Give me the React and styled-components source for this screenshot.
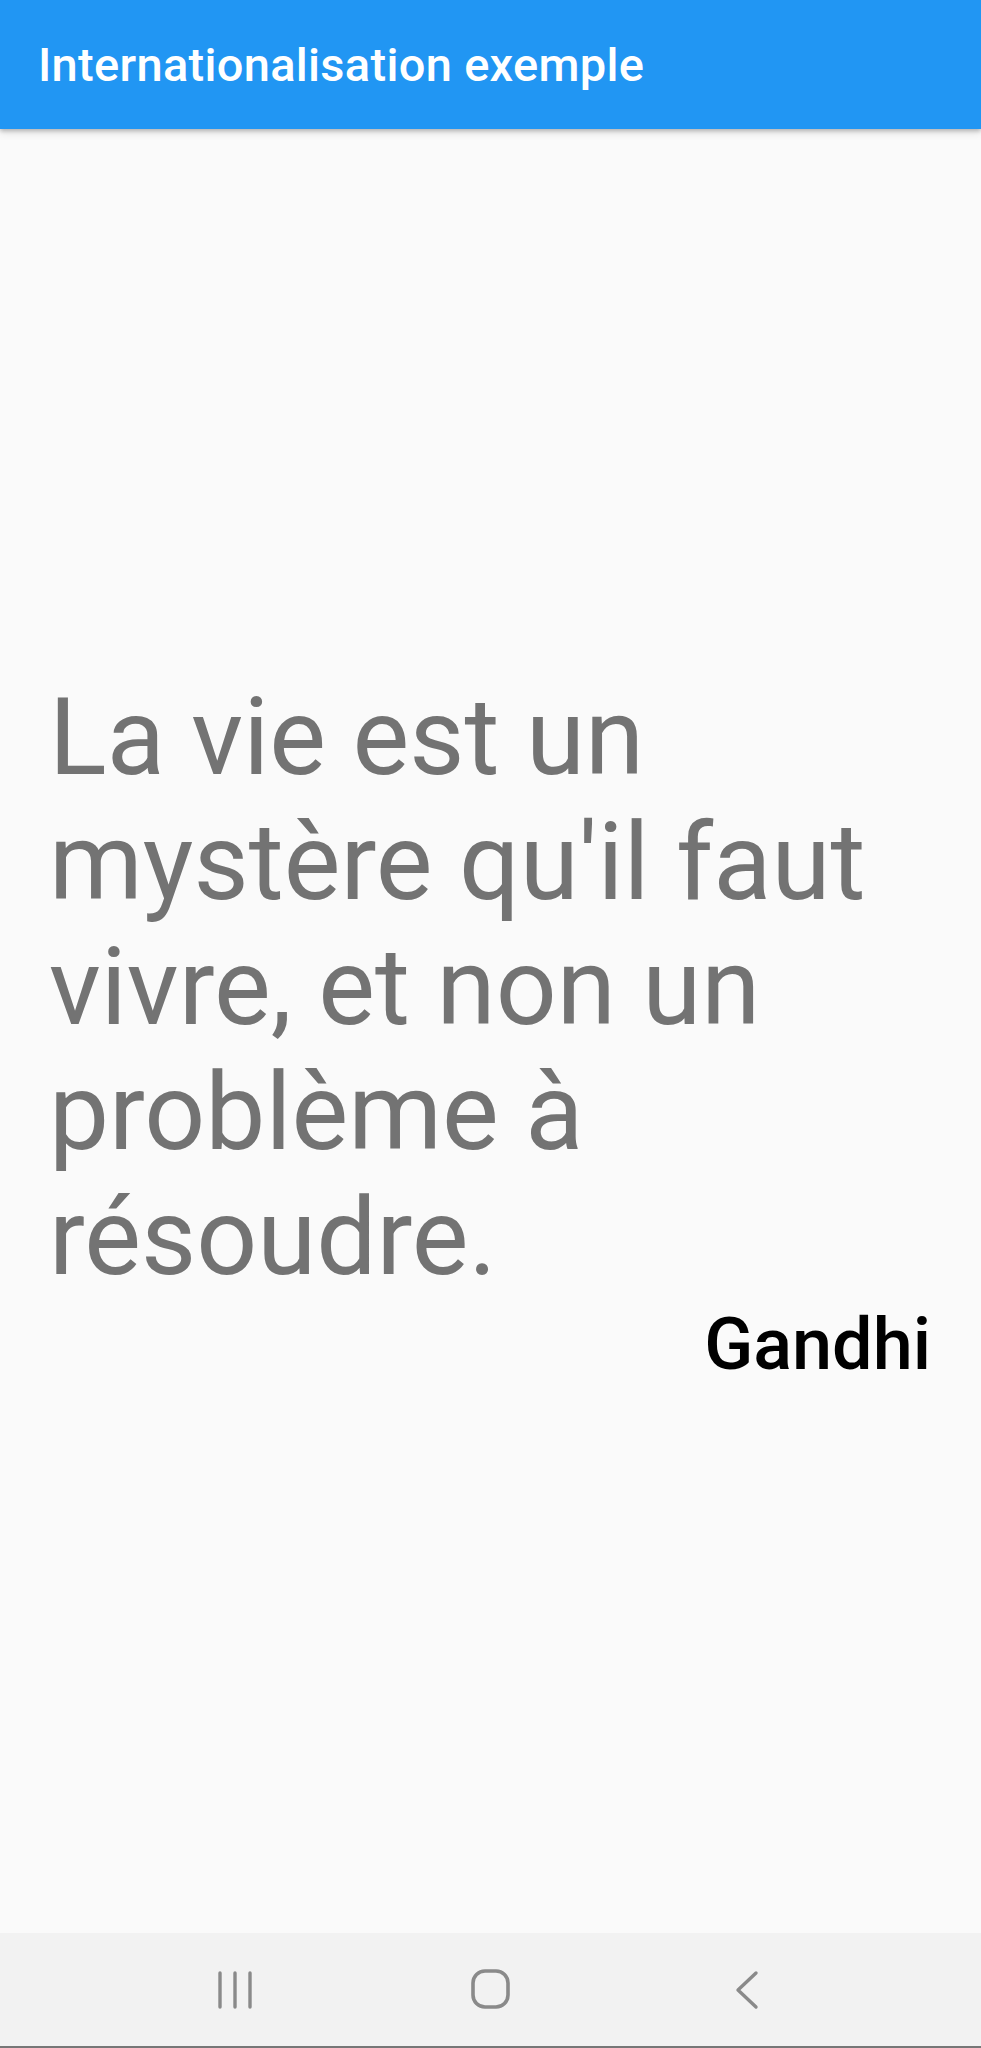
import React from "react";
import styled, { createGlobalStyle } from "styled-components";

const GlobalStyle = createGlobalStyle`
  html, body {
    margin: 0;
    padding: 0;
    background: #fafafa;
    font-family: Roboto, "Liberation Sans", sans-serif;
  }
`;

const Screen = styled.div`
  display: flex;
  flex-direction: column;
  width: 981px;
  height: 2048px;
  background: #fafafa;
  overflow: hidden;
`;

const AppBar = styled.header`
  display: flex;
  align-items: center;
  height: 129px;
  flex-shrink: 0;
  padding-left: 38px;
  background: #2196f3;
  box-shadow: 0 2px 4px rgba(0, 0, 0, 0.22), 0 4px 8px rgba(0, 0, 0, 0.1);
  position: relative;
  z-index: 1;
`;

const Title = styled.h1`
  margin: 0;
  color: #fff;
  font-size: 47px;
  font-weight: 500;
  letter-spacing: 0.3px;
  line-height: normal;
`;

const Body = styled.main`
  flex: 1;
  display: flex;
  flex-direction: column;
  justify-content: center;
  padding: 0 50px 0 49px;
`;

const Quote = styled.p`
  margin: 0;
  color: #737373;
  font-size: 107px;
  font-weight: 400;
  line-height: normal;
`;

const Author = styled.span`
  align-self: flex-end;
  margin-top: 2px;
  color: #000;
  font-size: 72px;
  font-weight: 500;
  line-height: normal;
`;

const NavBar = styled.nav`
  display: flex;
  justify-content: center;
  align-items: center;
  height: 113px;
  flex-shrink: 0;
  background: #f2f2f2;
  border-bottom: 2px solid #777;
`;

const NavButton = styled.div`
  display: flex;
  justify-content: center;
  align-items: center;
  width: 256px;
  height: 100%;
  color: #8a8a8a;
`;

const Recents = () => (
  <svg width="36" height="40" viewBox="0 0 36 40" fill="none" stroke="currentColor" strokeWidth="3.4" strokeLinecap="round">
    <line x1="3" y1="3" x2="3" y2="37" />
    <line x1="18" y1="3" x2="18" y2="37" />
    <line x1="33" y1="3" x2="33" y2="37" />
  </svg>
);

const Home = () => (
  <svg width="40" height="41" viewBox="0 0 40 41" fill="none" stroke="currentColor" strokeWidth="3.6">
    <rect x="2" y="2" width="35" height="36" rx="12" />
  </svg>
);

const Back = () => (
  <svg width="26" height="40" viewBox="0 0 26 40" fill="none" stroke="currentColor" strokeWidth="3.4" strokeLinecap="round" strokeLinejoin="round">
    <polyline points="22,3 4,20 22,37" />
  </svg>
);

export default function App() {
  return (
    <>
      <GlobalStyle />
      <Screen>
        <AppBar>
          <Title>Internationalisation exemple</Title>
        </AppBar>
        <Body>
          <Quote>La vie est un mystère qu'il faut vivre, et non un problème à résoudre.</Quote>
          <Author>Gandhi</Author>
        </Body>
        <NavBar>
          <NavButton>
            <Recents />
          </NavButton>
          <NavButton>
            <Home />
          </NavButton>
          <NavButton>
            <Back />
          </NavButton>
        </NavBar>
      </Screen>
    </>
  );
}
